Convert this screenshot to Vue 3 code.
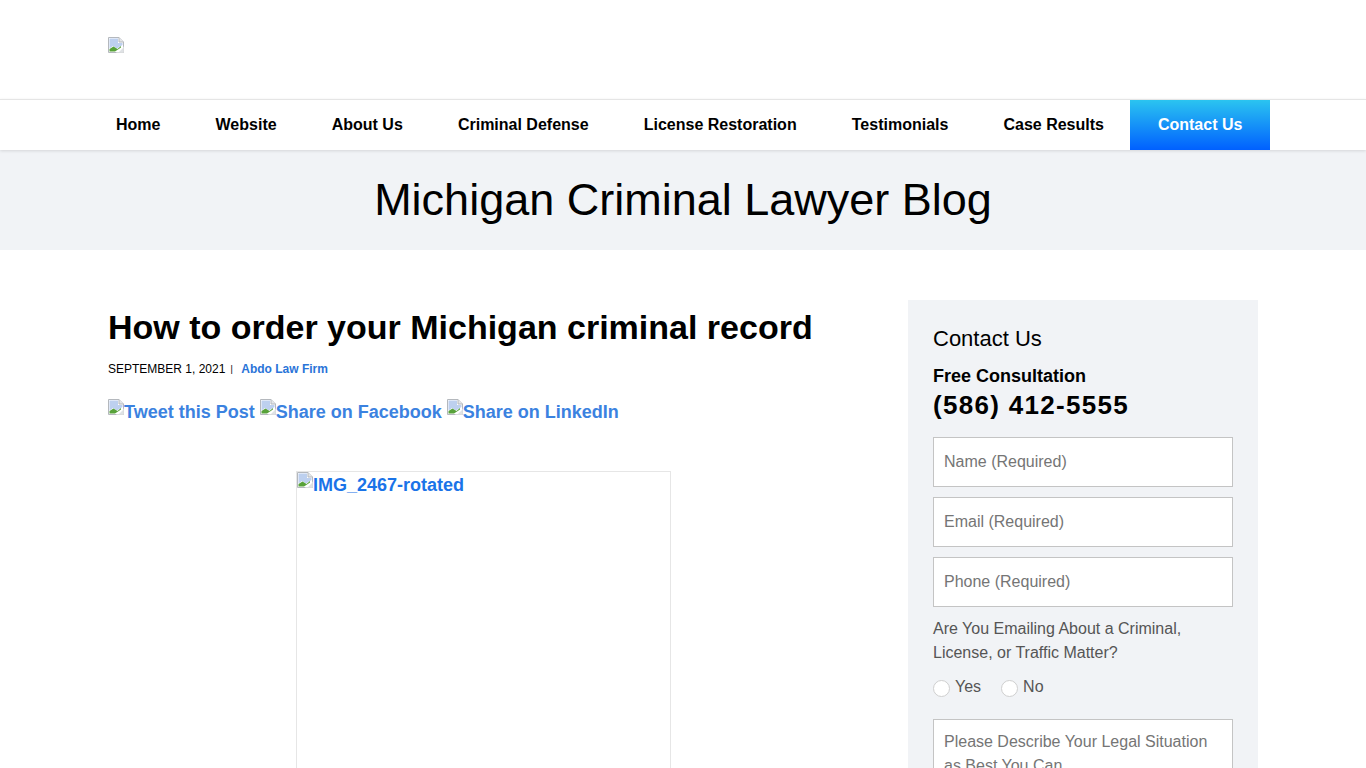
<template>
  <div class="page">
    <!-- logo -->
    <header class="top">
      <svg class="broken" viewBox="0 0 16 16"><use href="#broken-img" /></svg>
    </header>

    <nav class="nav">
      <a v-for="item in navItems" :key="item" class="nav-item">{{ item }}</a>
      <a class="nav-item nav-cta">Contact Us</a>
    </nav>

    <div class="band">Michigan Criminal Lawyer Blog</div>

    <main class="content">
      <article class="post">
        <h1>How to order your Michigan criminal record</h1>
        <div class="meta">
          <span>SEPTEMBER 1, 2021</span>
          <span class="sep">|</span>
          <a class="author">Abdo Law Firm</a>
        </div>
        <div class="share">
          <a v-for="s in shares" :key="s" class="share-link">
            <svg class="broken" viewBox="0 0 16 16"><use href="#broken-img" /></svg>{{ s }}
          </a>
        </div>
        <div class="photo-wrap">
          <a class="photo">
            <svg class="broken" viewBox="0 0 16 16"><use href="#broken-img" /></svg>IMG_2467-rotated
          </a>
        </div>
      </article>

      <aside class="side">
        <h2>Contact Us</h2>
        <div class="free">Free Consultation</div>
        <div class="phone">(586) 412-5555</div>
        <form class="form">
          <input v-for="f in fields" :key="f" class="field" type="text" :placeholder="f" />
          <p class="question">Are You Emailing About a Criminal, License, or Traffic Matter?</p>
          <div class="radios">
            <label class="radio"><span class="dot"></span>Yes</label>
            <label class="radio"><span class="dot"></span>No</label>
          </div>
          <textarea class="field area" placeholder="Please Describe Your Legal Situation as Best You Can"></textarea>
        </form>
      </aside>
    </main>

    <!-- broken image glyph, reused everywhere -->
    <svg class="defs" width="0" height="0">
      <symbol id="broken-img" viewBox="0 0 16 16">
        <path d="M.5 .5H11L15.5 5V15.5H.5Z" fill="#fff" stroke="#b4b8bd" />
        <path d="M11 .5V5H15.5" fill="#e4e6e9" stroke="#b4b8bd" />
        <path d="M1.5 1.5H10V6H14.5V8L9 11.5L5 9L1.5 11.5Z" fill="#bdd0ef" />
        <path d="M1.5 14.5V12L5.5 9.5L9.5 12L13 9V10.5L7 14.5Z" fill="#58a23a" />
        <path d="M8 15.5L15.5 9.5V15.5Z" fill="#fff" />
        <path d="M11 15L15 11V15Z" fill="#dfe2e5" />
      </symbol>
    </svg>
  </div>
</template>

<script setup>
const navItems = ['Home', 'Website', 'About Us', 'Criminal Defense', 'License Restoration', 'Testimonials', 'Case Results']
const shares = ['Tweet this Post', 'Share on Facebook', 'Share on LinkedIn']
const fields = ['Name (Required)', 'Email (Required)', 'Phone (Required)']
</script>

<style>
html, body {
  margin: 0;
  overflow: hidden;
  background: #fff;
}
</style>

<style scoped>
.page {
  height: 768px;
  overflow: hidden;
  font-family: "Liberation Sans", Arial, sans-serif;
  color: #000;
}

.broken {
  display: inline-block;
  width: 16px;
  height: 16px;
}

.defs {
  position: absolute;
}

.top {
  height: 99px;
  box-sizing: border-box;
  padding: 37px 0 0 108px;
}

.top .broken {
  display: block;
}

.nav {
  height: 50px;
  border-top: 1px solid #e5e5e5;
  padding-left: 108px;
  display: flex;
  position: relative;
  box-shadow: 0 1px 3px rgba(0, 0, 0, 0.12);
}

.nav-item {
  padding: 0 27.55px;
  line-height: 49px;
  font-size: 16px;
  font-weight: 700;
  white-space: nowrap;
}

.nav-item:first-child {
  padding-left: 8px;
}

.nav-cta {
  color: #fff;
  padding: 0 28px;
  margin-left: -1.6px;
  background: linear-gradient(#2bc4f0, #0060ff);
}

.band {
  height: 100px;
  background: #f1f3f6;
  text-align: center;
  font-size: 45px;
  line-height: 100px;
}

.content {
  display: flex;
  padding: 50px 0 0 108px;
}

.post {
  width: 800px;
}

h1 {
  margin: 0;
  font-size: 34px;
  line-height: 54px;
  font-weight: 700;
}

.meta {
  margin-top: 6px;
  font-size: 12px;
  line-height: 18px;
  display: flex;
  align-items: center;
}

.sep {
  margin: 0 8.5px 0 5px;
  font-size: 9px;
}

.author {
  color: #2a74d8;
  font-weight: 700;
}

.share {
  margin-top: 21px;
  display: flex;
  gap: 5px;
  line-height: 24px;
}

.share-link {
  font-size: 18px;
  font-weight: 700;
  color: #3b82e0;
  white-space: nowrap;
}

.share-link .broken,
.photo .broken {
  vertical-align: 3px;
}

.photo-wrap {
  margin-top: 47px;
  padding-left: 188px;
}

.photo {
  display: block;
  box-sizing: border-box;
  width: 375px;
  height: 500px;
  border: 1px solid #e6e6e6;
  font-size: 18px;
  font-weight: 700;
  color: #1a73e8;
  line-height: 25px;
}

.side {
  width: 350px;
  height: 600px;
  box-sizing: border-box;
  background: #f1f3f6;
  padding: 25px;
}

h2 {
  margin: 0;
  font-size: 22px;
  font-weight: 400;
  line-height: 28px;
}

.free {
  margin-top: 12px;
  font-size: 18px;
  font-weight: 700;
  line-height: 22px;
}

.phone {
  font-size: 26px;
  font-weight: 700;
  line-height: 36px;
  letter-spacing: 1.3px;
}

.form {
  margin-top: 14px;
  display: flex;
  flex-direction: column;
  gap: 10px;
}

.field {
  width: 300px;
  height: 50px;
  box-sizing: border-box;
  border: 1px solid #c4c4c4;
  border-radius: 0;
  background: #fff;
  padding: 0 10px;
  font-family: inherit;
  font-size: 16px;
  outline: none;
}

.field::placeholder {
  color: #757575;
  opacity: 1;
}

.question {
  margin: 0;
  font-size: 16px;
  line-height: 24px;
  color: #555;
}

.radios {
  display: flex;
  gap: 20px;
  height: 24px;
  margin-bottom: 10px;
  align-items: center;
}

.radio {
  display: flex;
  align-items: center;
  gap: 5px;
  font-size: 16px;
  color: #555;
}

.dot {
  width: 17px;
  height: 17px;
  box-sizing: border-box;
  border: 1px solid #cfcfcf;
  border-radius: 50%;
  background: #fff;
  margin-top: 2px;
}

.area {
  height: 120px;
  padding: 10px;
  line-height: 24px;
  resize: none;
}
</style>
